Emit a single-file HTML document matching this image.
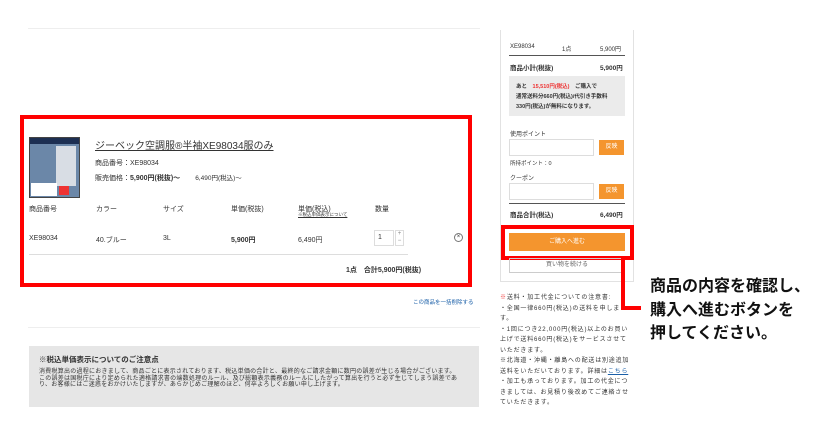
<!DOCTYPE html>
<html><head><meta charset="utf-8"><style>
*{margin:0;padding:0;box-sizing:border-box}
body{width:840px;height:438px;background:#fff;font-family:"Liberation Sans","Noto Sans CJK JP",sans-serif;color:#333;position:relative;overflow:hidden;font-size:7px}
.a{position:absolute;white-space:nowrap}
.b{font-weight:bold}
</style></head><body>
<div class="a" style="left:28px;top:28px;width:452px;height:1px;background:#eee"></div>
<div class="a" style="left:20px;top:115px;width:452px;height:172px;border:4px solid #f00"></div>
<div class="a" style="left:29px;top:137px;width:51px;height:61px;background:#6b87a8;border:1px solid #444"></div>
<div class="a" style="left:30px;top:138px;width:49px;height:6px;background:#1d2f52"></div>
<div class="a" style="left:56px;top:146px;width:20px;height:40px;background:#d8dde4"></div>
<div class="a" style="left:31px;top:183px;width:26px;height:13px;background:#fff"></div>
<div class="a" style="left:59px;top:186px;width:10px;height:9px;background:#e33"></div>
<div class="a" style="left:95px;top:137px;font-size:10px;text-decoration:underline;color:#333">ジーベック空調服®半袖XE98034服のみ</div>
<div class="a" style="left:95px;top:158px">商品番号：XE98034</div>
<div class="a" style="left:95px;top:172px">販売価格：<b>5,900円(税抜)〜</b>　<span style="font-size:6.5px;margin-left:8px">6,490円(税込)〜</span></div>
<div class="a" style="left:29px;top:204px">商品番号</div>
<div class="a" style="left:96px;top:204px">カラー</div>
<div class="a" style="left:163px;top:204px">サイズ</div>
<div class="a" style="left:231px;top:204px">単価(税抜)</div>
<div class="a" style="left:298px;top:204px">単価(税込)</div>
<div class="a" style="left:298px;top:212px;font-size:4.5px;text-decoration:underline">※税込単価表示について</div>
<div class="a" style="left:375px;top:204px">数量</div>
<div class="a" style="left:29px;top:235px">XE98034</div>
<div class="a" style="left:96px;top:235px">40.ブルー</div>
<div class="a" style="left:163px;top:235px">3L</div>
<div class="a b" style="left:231px;top:235px">5,900円</div>
<div class="a" style="left:298px;top:235px">6,490円</div>
<div class="a" style="left:374px;top:230px;width:20px;height:16px;border:1px solid #ddd;padding:3px 0 0 3px">1</div>
<div class="a" style="left:395px;top:230px;width:9px;height:16px;border:1px solid #ddd;font-size:6px;text-align:center;line-height:7px;color:#888">+<br>−</div>
<div class="a" style="left:454px;top:233px;width:9px;height:9px;border:1px solid #777;border-radius:50%;font-size:6px;text-align:center;line-height:7px">×</div>
<div class="a" style="left:29px;top:254px;width:379px;height:1px;background:#ddd"></div>
<div class="a b" style="left:346px;top:265px">1点　合計5,900円(税抜)</div>
<div class="a" style="left:413px;top:298px;font-size:5.5px;color:#1a5fa8">この商品を一括削除する</div>
<div class="a" style="left:28px;top:327px;width:452px;height:1px;background:#eee"></div>
<div class="a" style="left:29px;top:346px;width:450px;height:61px;background:#e6e6e6"></div>
<div class="a b" style="left:39px;top:354px;font-size:7.5px">※税込単価表示についてのご注意点</div>
<div class="a" style="left:39px;top:369px;font-size:6px;line-height:6.5px;white-space:normal;width:430px;letter-spacing:0.25px">消費税算出の過程におきまして、商品ごとに表示されております、税込単価の合計と、最終的なご請求金額に数円の誤差が生じる場合がございます。<br>この誤差は国税庁により定められた適格請求書の端数処理のルール、及び総額表示義務のルールにしたがって算出を行うと必ず生じてしまう誤差であり、お客様にはご迷惑をおかけいたしますが、あらかじめご理解のほど、何卒よろしくお願い申し上げます。</div>
<div class="a" style="left:500px;top:30px;width:134px;height:252px;border:1px solid #e2e2e2;border-top:none"></div>
<div class="a" style="left:510px;top:44px;font-size:6px">XE98034</div>
<div class="a" style="left:562px;top:44px;font-size:6px">1点</div>
<div class="a" style="left:600px;top:44px;font-size:6px">5,900円</div>
<div class="a" style="left:509px;top:55px;width:116px;height:1px;background:#555"></div>
<div class="a b" style="left:510px;top:62px;font-size:6.5px">商品小計(税抜)</div>
<div class="a b" style="left:600px;top:62px;font-size:6.5px">5,900円</div>
<div class="a" style="left:509px;top:76px;width:116px;height:40px;background:#ebebeb"></div>
<div class="a" style="left:516px;top:82px;font-size:5.5px;line-height:10px;font-weight:bold">あと　<span style="color:#e33">15,510円(税込)</span>　ご購入で<br>通常送料分660円(税込)/代引き手数料<br>330円(税込)が無料になります。</div>
<div class="a" style="left:510px;top:129px;font-size:6px">使用ポイント</div>
<div class="a" style="left:509px;top:139px;width:85px;height:17px;border:1px solid #ddd"></div>
<div class="a" style="left:599px;top:140px;width:25px;height:15px;background:#f4952e;color:#fff;font-size:6px;text-align:center;line-height:15px">反映</div>
<div class="a" style="left:510px;top:159px;font-size:5.5px">所持ポイント：0</div>
<div class="a" style="left:510px;top:173px;font-size:6px">クーポン</div>
<div class="a" style="left:509px;top:183px;width:85px;height:17px;border:1px solid #ddd"></div>
<div class="a" style="left:599px;top:184px;width:25px;height:15px;background:#f4952e;color:#fff;font-size:6px;text-align:center;line-height:15px">反映</div>
<div class="a" style="left:509px;top:203px;width:116px;height:1px;background:#555"></div>
<div class="a b" style="left:510px;top:209px;font-size:6.5px">商品合計(税込)</div>
<div class="a b" style="left:600px;top:209px;font-size:6.5px">6,490円</div>
<div class="a" style="left:501px;top:225px;width:133px;height:35px;border:4px solid #f00"></div>
<div class="a" style="left:509px;top:233px;width:116px;height:18px;background:#f4952e;color:#fff;font-size:6px;text-align:center;line-height:18px">ご購入へ進む</div>
<div class="a" style="left:509px;top:258px;width:116px;height:15px;border:1px solid #ccc;font-size:6px;text-align:center;line-height:13px;color:#666">買い物を続ける</div>
<div class="a" style="left:621px;top:258px;width:4px;height:52px;background:#f00"></div>
<div class="a" style="left:621px;top:306px;width:20px;height:4px;background:#f00"></div>
<div class="a" style="left:500px;top:293px;font-size:6px;line-height:10.5px;white-space:normal;width:132px;letter-spacing:0.8px;color:#333"><span style="color:#e33">※</span>送料・加工代金についての注意書:<br>・全国一律660円(税込)の送料を申します。<br>・1回につき22,000円(税込)以上のお買い上げで送料660円(税込)をサービスさせていただきます。<br>※北海道・沖縄・離島への配送は別途追加送料をいただいております。詳細は<span style="color:#1a5fa8;text-decoration:underline">こちら</span><br>・加工も承っております。加工の代金につきましては、お見積り後改めてご連絡させていただきます。</div>
<div class="a b" style="left:650px;top:275px;font-size:16px;line-height:23.5px;color:#111">商品の内容を確認し、<br>購入へ進むボタンを<br>押してください。</div>
</body></html>
